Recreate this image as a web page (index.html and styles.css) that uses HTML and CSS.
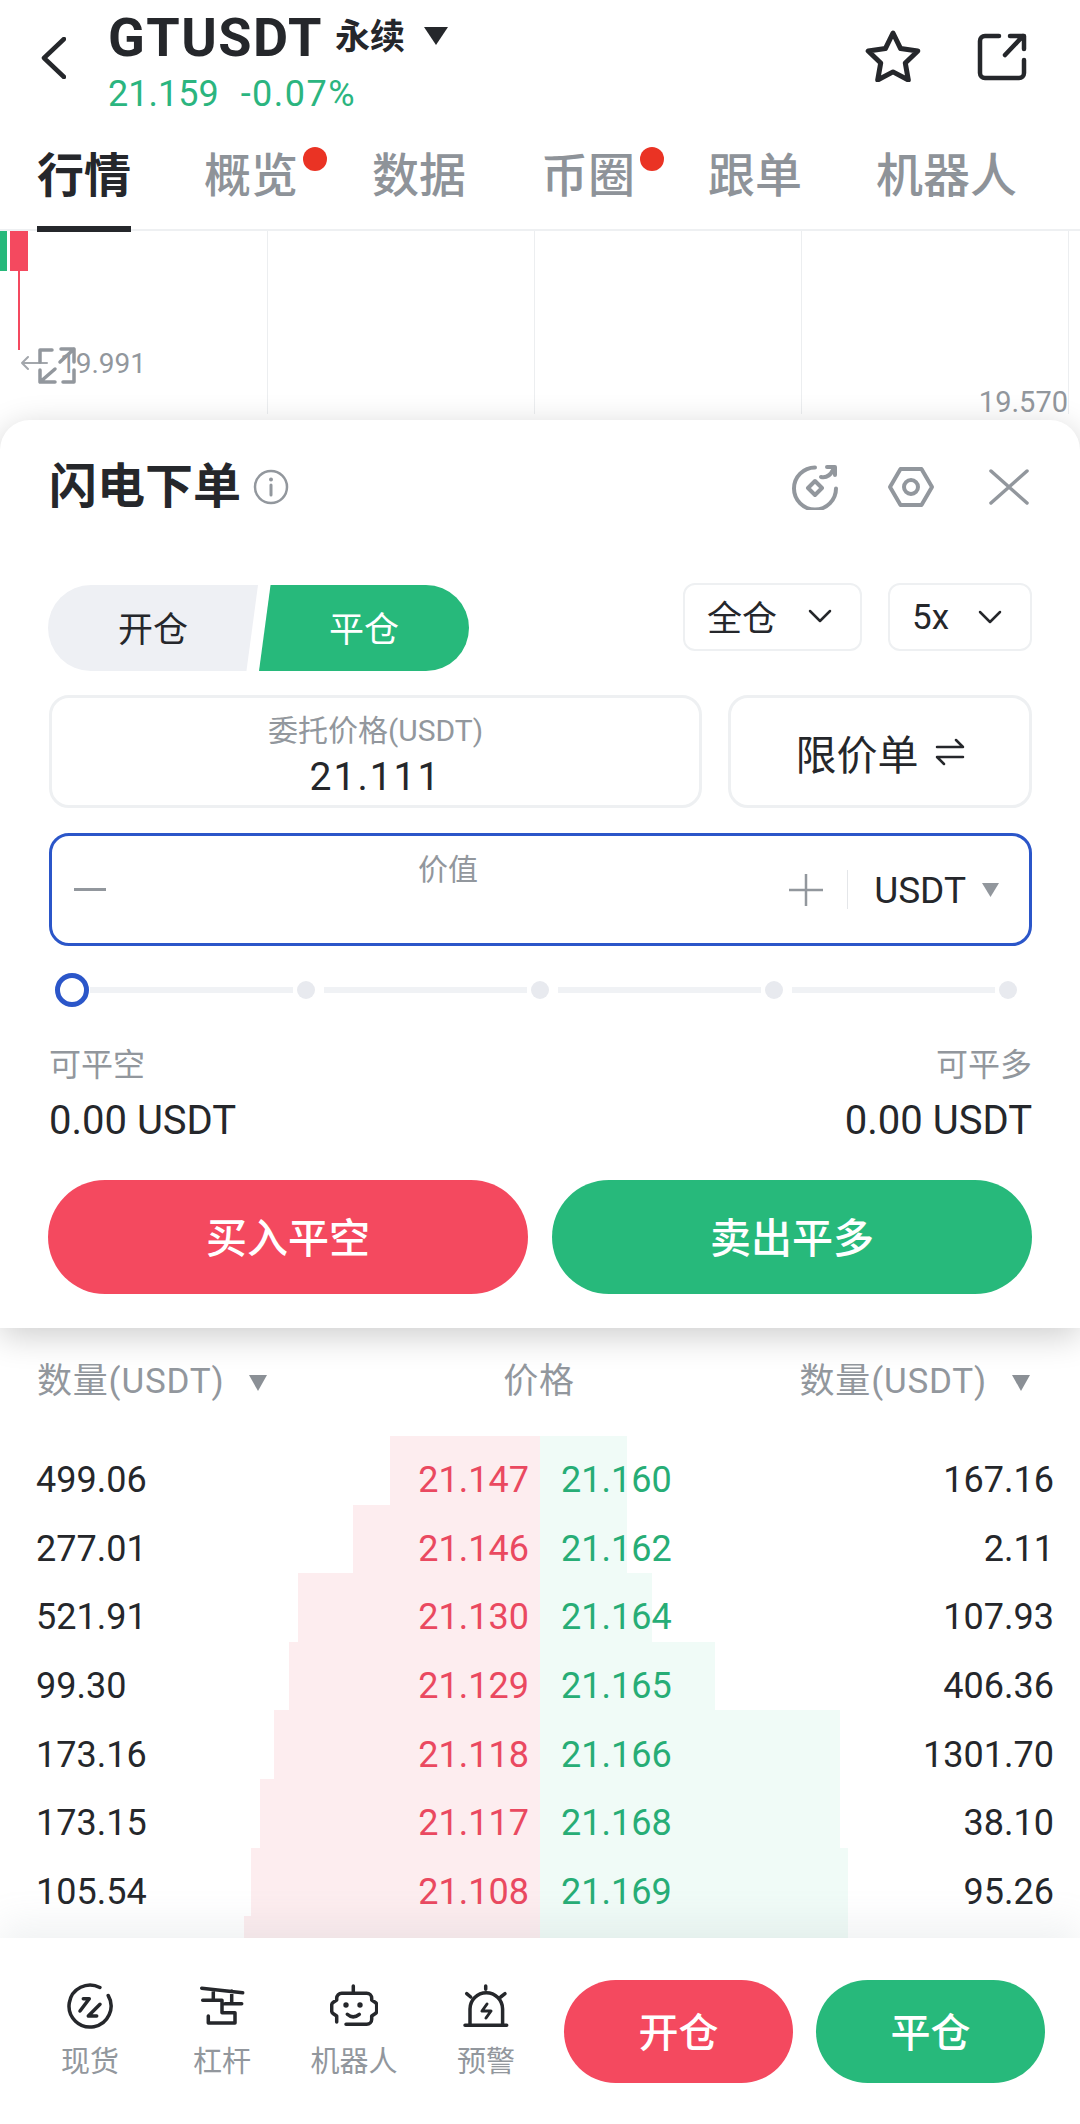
FILE: index.html
```html
<!DOCTYPE html>
<html lang="zh-CN">

<head>
    <meta charset="UTF-8">
    <meta name="viewport" content="width=device-width, initial-scale=1.0">
    <title>GTUSDT 永续</title>
    <link rel="stylesheet" href="styles.css">
</head>

<body>
    <div class="page">
        <!-- 顶部标题 -->
        <header class="top-bar">
            <svg class="back-icon" width="26" height="42" viewBox="0 0 26 42"><path d="M24 2 4 21l20 19" fill="none" stroke="#25272b" stroke-width="4.500" stroke-linecap="round" stroke-linejoin="round"/></svg>
            <div class="symbol">
                <div class="symbol-name">
                    <span class="symbol-code">GTUSDT</span>
                    <span class="symbol-type">永续</span>
                    <svg class="symbol-caret" width="26" height="20" viewBox="0 0 26 20"><path d="M1 1h24L13 19z" fill="#25272b"/></svg>
                </div>
                <div class="symbol-price"><span>21.159</span><span class="symbol-change">-0.07%</span></div>
            </div>
            <svg class="star-icon" width="58" height="52" viewBox="0 0 58 52"><path d="M29 3l7.600 15.600 17.200 2.400-12.500 12 3 17-15.300-8.100L13.700 50l3-17L4.200 21l17.200-2.400z" fill="none" stroke="#25272b" stroke-width="5" stroke-linejoin="round"/></svg>
            <svg class="share-icon" width="50" height="48" viewBox="0 0 50 48"><path d="M22 3H8a5 5 0 0 0-5 5v32a5 5 0 0 0 5 5h34a5 5 0 0 0 5-5V27M28 22 46 3M33 3h14v13" fill="none" stroke="#25272b" stroke-width="4.500" stroke-linecap="round" stroke-linejoin="round"/></svg>
        </header>

        <nav class="tabs">
            <span class="tab active">行情</span>
            <span class="tab has-dot">概览</span>
            <span class="tab">数据</span>
            <span class="tab has-dot">币圈</span>
            <span class="tab">跟单</span>
            <span class="tab">机器人</span>
        </nav>

        <!-- K线图 -->
        <section class="chart">
            <i class="grid-line"></i><i class="grid-line"></i><i class="grid-line"></i><i class="grid-line"></i>
            <i class="candle-green"></i>
            <i class="candle-red"></i>
            <i class="candle-wick"></i>
            <span class="chart-low">19.991</span>
            <span class="chart-min">19.570</span>
            <svg class="expand-icon" width="60" height="42" viewBox="0 0 60 42">
                <path d="M7 12 1 18l6 6M1 18h25" fill="none" stroke="#a3a7ac" stroke-width="2" stroke-linecap="round" stroke-linejoin="round"/>
                <path d="M31 5H19v12M34 24 19 37M19 25v12h15M39 17 53 4M40 4h13v13M53 25v12H42" fill="none" stroke="#92979d" stroke-width="3.500" stroke-linecap="round" stroke-linejoin="round"/>
            </svg>
        </section>

        <!-- 闪电下单 -->
        <section class="sheet">
            <div class="sheet-head">
                <h2 class="sheet-title">闪电下单</h2>
                <svg class="info-icon" width="36" height="36" viewBox="0 0 36 36"><circle cx="18" cy="18" r="16" fill="none" stroke="#92979d" stroke-width="2.500"/><path d="M18 16v10" stroke="#92979d" stroke-width="3" stroke-linecap="round"/><circle cx="18" cy="10.500" r="2" fill="#92979d"/></svg>
                <div class="sheet-tools">
                    <svg width="48" height="46" viewBox="0 0 48 46"><path d="M24 3.500a21 21 0 1 0 21 21M24 17l7 7-7 7-7-7z" fill="none" stroke="#92979d" stroke-width="4" stroke-linecap="round" stroke-linejoin="round"/><path d="M30 13c5 1 9-1 12-7M36 3h8v8" fill="none" stroke="#92979d" stroke-width="4" stroke-linecap="round" stroke-linejoin="round"/></svg>
                    <svg width="48" height="42" viewBox="0 0 48 42"><path d="M13.500 3h21L45 21 34.500 39h-21L3 21z" fill="none" stroke="#92979d" stroke-width="4" stroke-linejoin="round"/><circle cx="24" cy="21" r="7" fill="none" stroke="#92979d" stroke-width="4"/></svg>
                    <svg width="40" height="36" viewBox="0 0 40 36"><path d="M2 2l36 32M38 2 2 34" fill="none" stroke="#92979d" stroke-width="3.500" stroke-linecap="round"/></svg>
                </div>
            </div>

            <div class="mode-row">
                <div class="mode-toggle">
                    <span class="mode-open">开仓</span>
                    <span class="mode-close">平仓</span>
                </div>
                <div class="select select-margin">全仓
                    <svg width="24" height="14" viewBox="0 0 24 14"><path d="M2 2l10 10L22 2" fill="none" stroke="#25272b" stroke-width="2.500" stroke-linecap="round" stroke-linejoin="round"/></svg>
                </div>
                <div class="select select-lever">5x
                    <svg width="24" height="14" viewBox="0 0 24 14"><path d="M2 2l10 10L22 2" fill="none" stroke="#25272b" stroke-width="2.500" stroke-linecap="round" stroke-linejoin="round"/></svg>
                </div>
            </div>

            <div class="price-row">
                <div class="box price-box">
                    <span class="field-label">委托价格(USDT)</span>
                    <span class="price-value">21.111</span>
                </div>
                <div class="box type-box">限价单
                    <svg width="30" height="28" viewBox="0 0 30 28"><path d="M2 9h26l-7-7M28 19H2l7 7" fill="none" stroke="#25272b" stroke-width="2.500" stroke-linecap="round" stroke-linejoin="round"/></svg>
                </div>
            </div>

            <div class="amount-box">
                <i class="amount-minus"></i>
                <span class="amount-label">价值</span>
                <svg class="amount-plus" width="34" height="32" viewBox="0 0 34 32"><path d="M0 16h34M17 0v32" stroke="#92979d" stroke-width="2.500"/></svg>
                <i class="amount-divider"></i>
                <span class="amount-unit">USDT</span>
                <svg width="17" height="14" viewBox="0 0 17 14"><path d="M0 0h17l-8.500 14z" fill="#92979d"/></svg>
            </div>

            <div class="slider">
                <i class="slider-handle"></i>
                <i class="slider-track"></i><i class="slider-dot"></i>
                <i class="slider-track"></i><i class="slider-dot"></i>
                <i class="slider-track"></i><i class="slider-dot"></i>
                <i class="slider-track"></i><i class="slider-dot"></i>
            </div>

            <div class="avail-row">
                <div>
                    <div class="avail-label">可平空</div>
                    <div class="avail-value">0.00 USDT</div>
                </div>
                <div class="avail-right">
                    <div class="avail-label">可平多</div>
                    <div class="avail-value">0.00 USDT</div>
                </div>
            </div>

            <div class="action-row">
                <button class="action-btn red">买入平空</button>
                <button class="action-btn green">卖出平多</button>
            </div>
        </section>

        <!-- 盘口 -->
        <section class="book">
            <div class="book-head">
                <span class="book-qty">数量(USDT)<svg width="18" height="16" viewBox="0 0 18 16"><path d="M0 0h18L9 16z" fill="#8b9096"/></svg></span>
                <span class="book-price">价格</span>
                <span class="book-qty">数量(USDT)<svg width="18" height="16" viewBox="0 0 18 16"><path d="M0 0h18L9 16z" fill="#8b9096"/></svg></span>
            </div>
            <div class="book-rows">
                <div class="book-row">
                    <div class="bid"><i class="bar bar-red" style="width:150px"></i><span>499.06</span><b>21.147</b></div>
                    <div class="ask"><i class="bar bar-green" style="width:87px"></i><b>21.160</b><span>167.16</span></div>
                </div>
                <div class="book-row">
                    <div class="bid"><i class="bar bar-red" style="width:187px"></i><span>277.01</span><b>21.146</b></div>
                    <div class="ask"><i class="bar bar-green" style="width:87px"></i><b>21.162</b><span>2.11</span></div>
                </div>
                <div class="book-row">
                    <div class="bid"><i class="bar bar-red" style="width:242px"></i><span>521.91</span><b>21.130</b></div>
                    <div class="ask"><i class="bar bar-green" style="width:112px"></i><b>21.164</b><span>107.93</span></div>
                </div>
                <div class="book-row">
                    <div class="bid"><i class="bar bar-red" style="width:251px"></i><span>99.30</span><b>21.129</b></div>
                    <div class="ask"><i class="bar bar-green" style="width:175px"></i><b>21.165</b><span>406.36</span></div>
                </div>
                <div class="book-row">
                    <div class="bid"><i class="bar bar-red" style="width:266px"></i><span>173.16</span><b>21.118</b></div>
                    <div class="ask"><i class="bar bar-green" style="width:300px"></i><b>21.166</b><span>1301.70</span></div>
                </div>
                <div class="book-row">
                    <div class="bid"><i class="bar bar-red" style="width:280px"></i><span>173.15</span><b>21.117</b></div>
                    <div class="ask"><i class="bar bar-green" style="width:300px"></i><b>21.168</b><span>38.10</span></div>
                </div>
                <div class="book-row">
                    <div class="bid"><i class="bar bar-red" style="width:289px"></i><span>105.54</span><b>21.108</b></div>
                    <div class="ask"><i class="bar bar-green" style="width:308px"></i><b>21.169</b><span>95.26</span></div>
                </div>
                <div class="book-row">
                    <div class="bid"><i class="bar bar-red" style="width:296px"></i></div>
                    <div class="ask"><i class="bar bar-green" style="width:308px"></i></div>
                </div>
            </div>
        </section>

        <!-- 底部导航 -->
        <footer class="bottom-bar">
            <div class="nav-item">
                <svg width="48" height="48" viewBox="0 0 48 48"><path d="M42.200 13.500A21 21 0 1 1 33.900 5.500" fill="none" stroke="#25272b" stroke-width="3.500" stroke-linecap="round"/><path d="M17.300 16.700h6L14 29M34 22.300 22.300 34h8.400" fill="none" stroke="#25272b" stroke-width="3.500" stroke-linecap="round" stroke-linejoin="round"/></svg>
                <span>现货</span>
            </div>
            <div class="nav-item">
                <svg width="48" height="48" viewBox="0 0 48 48"><path d="M3.700 6.300l41 4.400M15.300 8v10M4.700 18.300H24v12.400h13V41H10.300v-7M33.700 9v12.700M27 21.700h16.700" fill="none" stroke="#25272b" stroke-width="3.500" stroke-linecap="round" stroke-linejoin="round"/></svg>
                <span>杠杆</span>
            </div>
            <div class="nav-item">
                <svg width="48" height="48" viewBox="0 0 48 48"><path d="M23.300 4v7.300M6.700 40v-6L3 31.500a3 3 0 0 1-1.300-2.500V23a3 3 0 0 1 1.300-2.500L6.700 18v-1.700a5 5 0 0 1 5-5h25a5 5 0 0 1 5 5V18l3.700 2.500a3 3 0 0 1 1.300 2.500v6a3 3 0 0 1-1.300 2.500L41.700 34v3.300a5 5 0 0 1-5 5H16" fill="none" stroke="#25272b" stroke-width="3.500" stroke-linecap="round" stroke-linejoin="round"/><circle cx="16" cy="23" r="2.700" fill="#25272b"/><circle cx="30" cy="23" r="2.700" fill="#25272b"/><path d="M17.300 32.300Q23 37.500 29.300 32.300" fill="none" stroke="#25272b" stroke-width="3.500" stroke-linecap="round"/></svg>
                <span>机器人</span>
            </div>
            <div class="nav-item">
                <svg width="48" height="48" viewBox="0 0 48 48"><path d="M3 43.300h41.700M8 43V27a16.300 16.300 0 0 1 32.600 0v16M23.700 4v3.300M4.700 11.700 8.700 15M43 11.700 38.700 15" fill="none" stroke="#25272b" stroke-width="3.500" stroke-linecap="round" stroke-linejoin="round"/><path d="M25 22l-5 7h9l-5 7" fill="none" stroke="#25272b" stroke-width="3" stroke-linecap="round" stroke-linejoin="round"/></svg>
                <span>预警</span>
            </div>
            <button class="bar-btn red">开仓</button>
            <button class="bar-btn green">平仓</button>
        </footer>
    </div>
</body>

</html>
```

FILE: styles.css
```css
* {
    margin: 0;
    padding: 0;
    box-sizing: border-box;
}

body {
    background: #fff;
    color: #25272b;
    font-family: 'Roboto', 'Noto Sans CJK SC', sans-serif;
}

i {
    display: block;
}

.page {
    width: 1080px;
    height: 2124px;
    overflow: hidden;
}

/* 顶部 */
.top-bar {
    height: 122px;
    display: flex;
    align-items: flex-start;
    position: relative;
}

.back-icon {
    margin: 37px 0 0 40px;
}

.symbol {
    margin-left: 42px;
    flex: 1;
    padding-top: 10px;
}

.symbol-name {
    display: flex;
    align-items: center;
    height: 56px;
}

.symbol-code {
    font-size: 54px;
    font-weight: 700;
    letter-spacing: 1.500px;
    line-height: 56px;
}

.symbol-type {
    font-size: 35px;
    font-weight: 700;
    margin-left: 12px;
    margin-top: -10px;
}

.symbol-caret {
    margin-left: 18px;
    margin-top: -4px;
}

.symbol-price {
    color: #2bb57f;
    font-size: 36px;
    line-height: 44px;
    margin-top: 6px;
    display: flex;
    gap: 22px;
}

.symbol-change {
    letter-spacing: 1.500px;
}

.star-icon {
    margin: 30px 55px 0 0;
}

.share-icon {
    margin: 33px 53px 0 0;
}

/* 标签 */
.tabs {
    height: 109px;
    border-bottom: 2px solid #eef0f2;
    position: relative;
}

.tab {
    position: absolute;
    top: 23px;
    font-size: 47px;
    line-height: 62px;
    font-weight: 500;
    color: #8e9399;
}

.tab:nth-child(1) { left: 37px; }
.tab:nth-child(2) { left: 204px; }
.tab:nth-child(3) { left: 372px; }
.tab:nth-child(4) { left: 541px; }
.tab:nth-child(5) { left: 708px; }
.tab:nth-child(6) { left: 876px; }

.tab.active {
    color: #25272b;
    font-weight: 700;
}

.tab.active::after {
    content: '';
    position: absolute;
    left: 0;
    right: 0;
    top: 81px;
    height: 6px;
    background: #25272b;
}

.tab.has-dot::after {
    content: '';
    position: absolute;
    right: -29px;
    top: 2px;
    width: 24px;
    height: 24px;
    border-radius: 50%;
    background: #ea3324;
}

/* K线 */
.chart {
    height: 183px;
    position: relative;
    display: flex;
    padding-left: 267px;
}

.grid-line {
    flex: none;
    width: 1px;
    height: 100%;
    background: #eceef0;
    margin-right: 266px;
}

.candle-green,
.candle-red,
.candle-wick {
    position: absolute;
    top: 0;
}

.candle-green {
    left: 0;
    width: 7px;
    height: 40px;
    background: #27b97b;
}

.candle-red {
    left: 10px;
    width: 18px;
    height: 40px;
    background: #f4495f;
}

.candle-wick {
    left: 18px;
    width: 2px;
    height: 119px;
    background: #f4495f;
}

.chart-low,
.chart-min {
    position: absolute;
    font-size: 29px;
    line-height: 34px;
    color: #92979d;
}

.chart-low {
    font-size: 28px;
    left: 60px;
    top: 116px;
}

.chart-min {
    right: 12px;
    top: 154px;
}

.expand-icon {
    position: absolute;
    left: 21px;
    top: 114px;
}

/* 闪电下单面板 */
.sheet {
    height: 908px;
    margin-top: 6px;
    background: #fff;
    border-radius: 30px 30px 0 0;
    box-shadow: 0 8px 34px rgba(0, 0, 0, 0.2);
    padding: 37px 48px 0 49px;
    position: relative;
}

.sheet-head {
    height: 60px;
    display: flex;
    align-items: center;
}

.sheet-title {
    font-size: 48px;
    font-weight: 700;
    line-height: 60px;
}

.info-icon {
    margin-left: 12px;
}

.sheet-tools {
    margin-left: auto;
    display: flex;
    align-items: center;
    gap: 48px;
}

.sheet-tools svg:last-child {
    margin-left: 6px;
    margin-right: 3px;
}

.mode-row {
    margin-top: 66px;
    height: 88px;
    display: flex;
    align-items: flex-start;
}

.mode-toggle {
    display: flex;
    margin: 2px auto 0 -1px;
    gap: 1px;
}

.mode-open,
.mode-close {
    width: 210px;
    height: 86px;
    font-size: 35px;
    padding-bottom: 4px;
    display: flex;
    align-items: center;
    justify-content: center;
}

.mode-open {
    background: #eef0f4;
    border-radius: 43px 0 0 43px;
    clip-path: polygon(0 0, 100% 0, 94.500% 100%, 0 100%);
}

.mode-close {
    background: #27b97b;
    color: #fff;
    border-radius: 0 43px 43px 0;
    clip-path: polygon(5.500% 0, 100% 0, 100% 100%, 0 100%);
}

.select {
    height: 68px;
    border: 2px solid #eef0f2;
    border-radius: 12px;
    font-size: 35px;
    display: flex;
    align-items: center;
    justify-content: space-between;
    padding: 0 28px 3px 22px;
}

.select-margin {
    width: 179px;
}

.select-lever {
    width: 144px;
    margin-left: 26px;
    padding-bottom: 0;
}

.price-row {
    margin-top: 24px;
    display: flex;
    gap: 26px;
}

.box {
    height: 113px;
    border: 3px solid #eef0f2;
    border-radius: 20px;
}

.price-box {
    width: 653px;
    display: flex;
    flex-direction: column;
    align-items: center;
    padding-top: 14px;
}

.field-label {
    font-size: 30px;
    line-height: 38px;
    color: #92979d;
}

.price-value {
    font-size: 39px;
    line-height: 46px;
    letter-spacing: 2px;
    margin-top: 4px;
}

.type-box {
    width: 304px;
    font-size: 41px;
    display: flex;
    align-items: center;
    justify-content: center;
    gap: 16px;
}

.amount-box {
    margin-top: 25px;
    height: 113px;
    border: 3px solid #2b56c9;
    border-radius: 20px;
    display: flex;
    align-items: center;
    padding: 0 30px 0 22px;
    position: relative;
}

.amount-minus {
    width: 32px;
    height: 3px;
    background: #92979d;
    margin-top: 0;
}

.amount-label {
    position: absolute;
    left: 366px;
    top: 15px;
    font-size: 30px;
    line-height: 38px;
    color: #92979d;
}

.amount-plus {
    margin-left: auto;
}

.amount-divider {
    width: 1px;
    height: 39px;
    background: #e4e6e9;
    margin: 0 26px 0 24px;
}

.amount-unit {
    font-size: 37px;
    margin-right: 16px;
    padding-top: 2px;
}

.slider {
    margin-top: 27px;
    height: 34px;
    display: flex;
    align-items: center;
    padding-left: 6px;
}

.slider-handle {
    width: 34px;
    height: 34px;
    border: 5px solid #2b56c9;
    border-radius: 50%;
    margin-right: 1px;
    flex: none;
}

.slider-track {
    width: 203px;
    height: 6px;
    background: #f0f2f5;
    flex: none;
}

.slider-dot {
    width: 18px;
    height: 18px;
    border-radius: 50%;
    background: #e8eaef;
    margin: 0 9px 0 4px;
    flex: none;
}

.avail-row {
    margin-top: 38px;
    display: flex;
    justify-content: space-between;
}

.avail-right {
    text-align: right;
}

.avail-label {
    font-size: 32px;
    line-height: 40px;
    color: #92979d;
}

.avail-value {
    font-size: 40px;
    line-height: 48px;
    margin-top: 12px;
}

.action-row {
    margin-top: 35px;
    display: flex;
    gap: 24px;
    margin-left: -1px;
}

.action-btn {
    width: 480px;
    height: 114px;
    border: none;
    border-radius: 57px;
    padding-bottom: 4px;
    color: #fff;
    font-family: inherit;
    font-size: 41px;
    font-weight: 500;
}

.red {
    background: #f4495f;
}

.green {
    background: #27b97b;
}

/* 盘口 */
.book {
    height: 610px;
    position: relative;
}

.book-head {
    height: 108px;
    padding: 32px 50px 0 37px;
    display: flex;
    justify-content: space-between;
    font-size: 35px;
    letter-spacing: 0.800px;
    line-height: 44px;
    color: #92979d;
}

.book-price {
    margin-left: 11px;
}

.book-qty svg {
    margin-left: 25px;
    vertical-align: 2px;
}

.book-rows {
    height: 502px;
    overflow: hidden;
}

.book-row {
    height: 68.600px;
    display: flex;
    font-size: 36px;
}

.bid,
.ask {
    width: 540px;
    height: 100%;
    position: relative;
    display: flex;
    align-items: center;
    justify-content: space-between;
    padding-top: 20px;
}

.bid {
    padding-left: 36px;
    padding-right: 11px;
}

.ask {
    padding-left: 21px;
    padding-right: 26px;
}

.bid b,
.ask b,
.bid span,
.ask span {
    position: relative;
    font-weight: 400;
}

.bid b {
    color: #ea4960;
}

.ask b {
    color: #27ad76;
}

.bar {
    position: absolute;
    top: 0;
    bottom: 0;
}

.bar-red {
    right: 0;
    background: #fdedef;
}

.bar-green {
    left: 0;
    background: #f0fbf7;
}

/* 底部 */
.bottom-bar {
    height: 186px;
    background: #fff;
    box-shadow: 0 -14px 34px rgba(150, 160, 170, 0.14);
    display: flex;
    align-items: flex-start;
    padding-left: 24px;
    position: relative;
}

.nav-item {
    width: 132px;
    padding-top: 44px;
    display: flex;
    flex-direction: column;
    align-items: center;
    font-size: 29px;
    line-height: 40px;
    color: #92979d;
}

.nav-item svg {
    margin-bottom: 12px;
}

.bar-btn {
    width: 229px;
    height: 103px;
    margin-top: 42px;
    margin-left: 12px;
    border: none;
    border-radius: 52px;
    padding-bottom: 3px;
    color: #fff;
    font-family: inherit;
    font-size: 40px;
    font-weight: 500;
}

.bar-btn + .bar-btn {
    margin-left: 23px;
}
```
